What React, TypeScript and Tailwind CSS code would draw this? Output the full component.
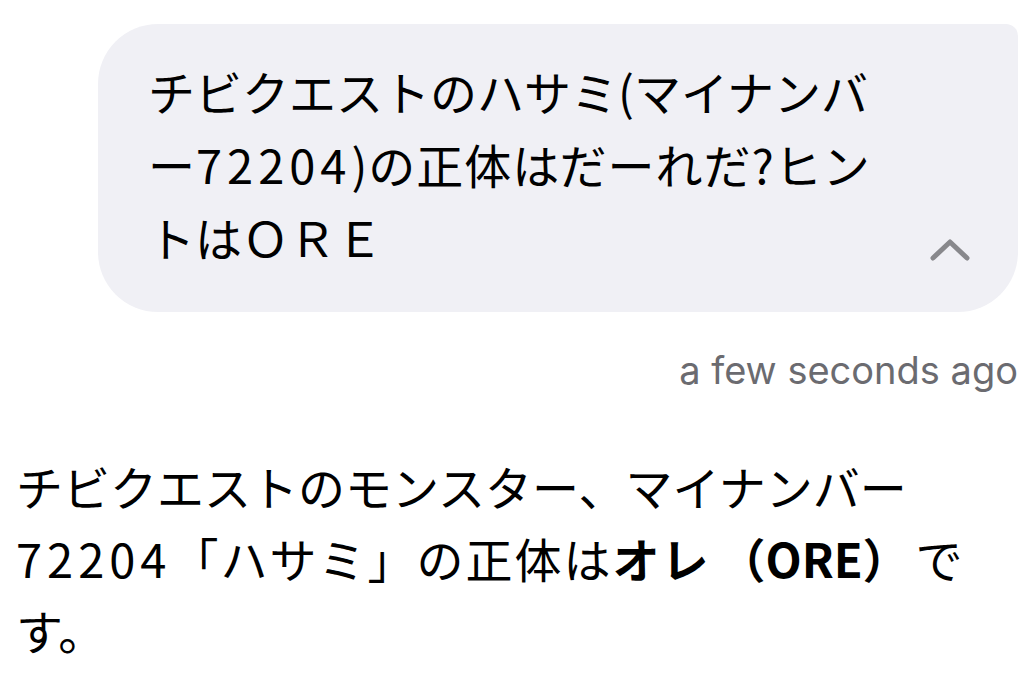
import React from "react";

const jp = { fontFamily: '"Noto Sans CJK JP", "Noto Sans", sans-serif' } as React.CSSProperties;

export default function App() {
  return (
    <div className="w-[1024px] h-[680px] bg-white overflow-hidden relative" style={jp}>
      <div className="pt-[24px] pl-[98px] pr-[6px]">
        <div className="relative bg-[#f0f0f5] rounded-tl-[60px] rounded-tr-[12px] rounded-br-[60px] rounded-bl-[60px] h-[288px] pl-[50px] pt-[30px]">
          <div className="text-[47px] leading-[73px] text-black whitespace-nowrap">
            <div>チビクエストのハサミ(マイナンバ</div>
            <div className="tracking-[1px]">
              ー<span className="tracking-[5px]">72204</span>)の正体はだーれだ?ヒン
            </div>
            <div>トはＯＲＥ</div>
          </div>
          <svg
            className="absolute left-[830px] top-[212px]"
            width="44"
            height="28"
            viewBox="0 0 44 28"
            fill="none"
          >
            <path d="M5 22 L22 6 L39 22" stroke="#88888c" strokeWidth="5" strokeLinecap="round" strokeLinejoin="round" />
          </svg>
        </div>
      </div>
      <div className="flex justify-end pr-[6px] mt-[35px]">
        <span className="text-[38px] leading-[46px] text-[#6b6b70]" style={{ fontFamily: 'Inter, "Noto Sans", sans-serif' }}>
          a few seconds ago
        </span>
      </div>
      <div className="pl-[16px] mt-[57px] text-[47px] leading-[72px] text-black whitespace-nowrap">
        <div>チビクエストのモンスター、マイナンバー</div>
        <div className="tracking-[2px]">
          <span className="tracking-[5px]">72204</span>「ハサミ」の正体は<span className="font-bold">オレ</span>
          <span className="font-bold tracking-[0px] ml-[8px]">（ORE）</span>
          <span className="ml-[6px]">で</span>
        </div>
        <div>す。</div>
      </div>
    </div>
  );
}
